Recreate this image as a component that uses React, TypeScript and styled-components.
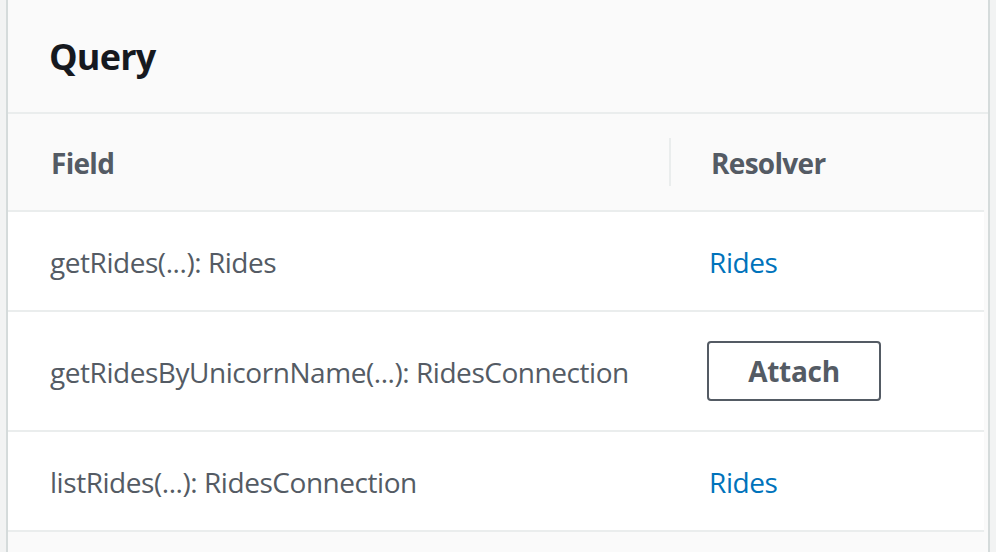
import React from "react";
import styled, { createGlobalStyle } from "styled-components";

const GlobalStyle = createGlobalStyle`
  html, body {
    margin: 0;
    padding: 0;
    background: #f2f3f3;
  }
  body {
    font-family: "Open Sans", "Noto Sans", Arial, sans-serif;
    -webkit-font-smoothing: antialiased;
  }
`;

const Page = styled.div`
  height: 552px;
  padding: 0 6px;
  box-sizing: border-box;
  overflow: hidden;
`;

const Panel = styled.section`
  height: 100%;
  box-sizing: border-box;
  border-left: 2px solid #d5dbdb;
  border-right: 2px solid #d5dbdb;
  background: #fafafa;
  display: flex;
  flex-direction: column;
`;

const PanelHeader = styled.header`
  height: 114px;
  flex-shrink: 0;
  box-sizing: border-box;
  padding-left: 41px;
  display: flex;
  align-items: center;
  border-bottom: 2px solid #eaeded;
`;

const Title = styled.h2`
  margin: 0;
  font-size: 36px;
  font-weight: 700;
  color: #16191f;
  letter-spacing: -0.8px;
`;

const Table = styled.div`
  margin-right: 4px;
  display: grid;
  grid-template-columns: 662px 1fr;
  border-bottom: 2px solid #eaeded;
  box-shadow: 0 1px 1px rgba(0, 0, 0, 0.04);
`;

const HeadCell = styled.div<{ $divider?: boolean }>`
  position: relative;
  display: flex;
  align-items: center;
  padding-left: ${(p) => (p.$divider ? "41px" : "43px")};
  padding-top: 2px;
  box-sizing: content-box;
  height: 94px;
  background: #fafafa;
  border-bottom: 2px solid #eaeded;
  font-size: 28px;
  font-weight: 700;
  color: #545b64;
  letter-spacing: -0.7px;

  &::before {
    content: "";
    display: ${(p) => (p.$divider ? "block" : "none")};
    position: absolute;
    left: -1px;
    top: 24px;
    bottom: 24px;
    width: 2px;
    background: #eaeded;
  }
`;

const Cell = styled.div<{ $last?: boolean; $resolver?: boolean }>`
  display: flex;
  align-items: center;
  min-height: ${(p) => (p.$last ? "98px" : "100px")};
  box-sizing: border-box;
  padding: 31px 0 29px ${(p) => (p.$resolver ? "39px" : "42px")};
  background: #ffffff;
  border-bottom: ${(p) => (p.$last ? "none" : "2px solid #eaeded")};
  font-size: 28px;
  color: #545b64;
  letter-spacing: -0.45px;
  white-space: nowrap;
`;

const ResolverLink = styled.a`
  color: #0073bb;
  text-decoration: none;
  letter-spacing: -0.4px;
`;

const AttachButton = styled.button`
  width: 174px;
  height: 60px;
  margin: -2px 0 0 -2px;
  box-sizing: border-box;
  border: 2px solid #545b64;
  border-radius: 4px;
  background: #ffffff;
  color: #545b64;
  font-family: inherit;
  font-size: 28px;
  font-weight: 700;
  letter-spacing: -0.3px;
  padding: 0;
  cursor: pointer;
`;

const Footer = styled.div`
  flex: 1;
  background: #fafafa;
`;

type Row = { field: string; resolver: string | null };

const rows: Row[] = [
  { field: "getRides(...): Rides", resolver: "Rides" },
  { field: "getRidesByUnicornName(...): RidesConnection", resolver: null },
  { field: "listRides(...): RidesConnection", resolver: "Rides" },
];

export default function App() {
  return (
    <>
      <GlobalStyle />
      <Page>
        <Panel>
          <PanelHeader>
            <Title>Query</Title>
          </PanelHeader>
          <Table>
            <HeadCell>Field</HeadCell>
            <HeadCell $divider>Resolver</HeadCell>
            {rows.map((r, i) => {
              const last = i === rows.length - 1;
              return (
                <React.Fragment key={r.field}>
                  <Cell $last={last}>{r.field}</Cell>
                  <Cell $last={last} $resolver>
                    {r.resolver ? (
                      <ResolverLink href="#">{r.resolver}</ResolverLink>
                    ) : (
                      <AttachButton>Attach</AttachButton>
                    )}
                  </Cell>
                </React.Fragment>
              );
            })}
          </Table>
          <Footer />
        </Panel>
      </Page>
    </>
  );
}
